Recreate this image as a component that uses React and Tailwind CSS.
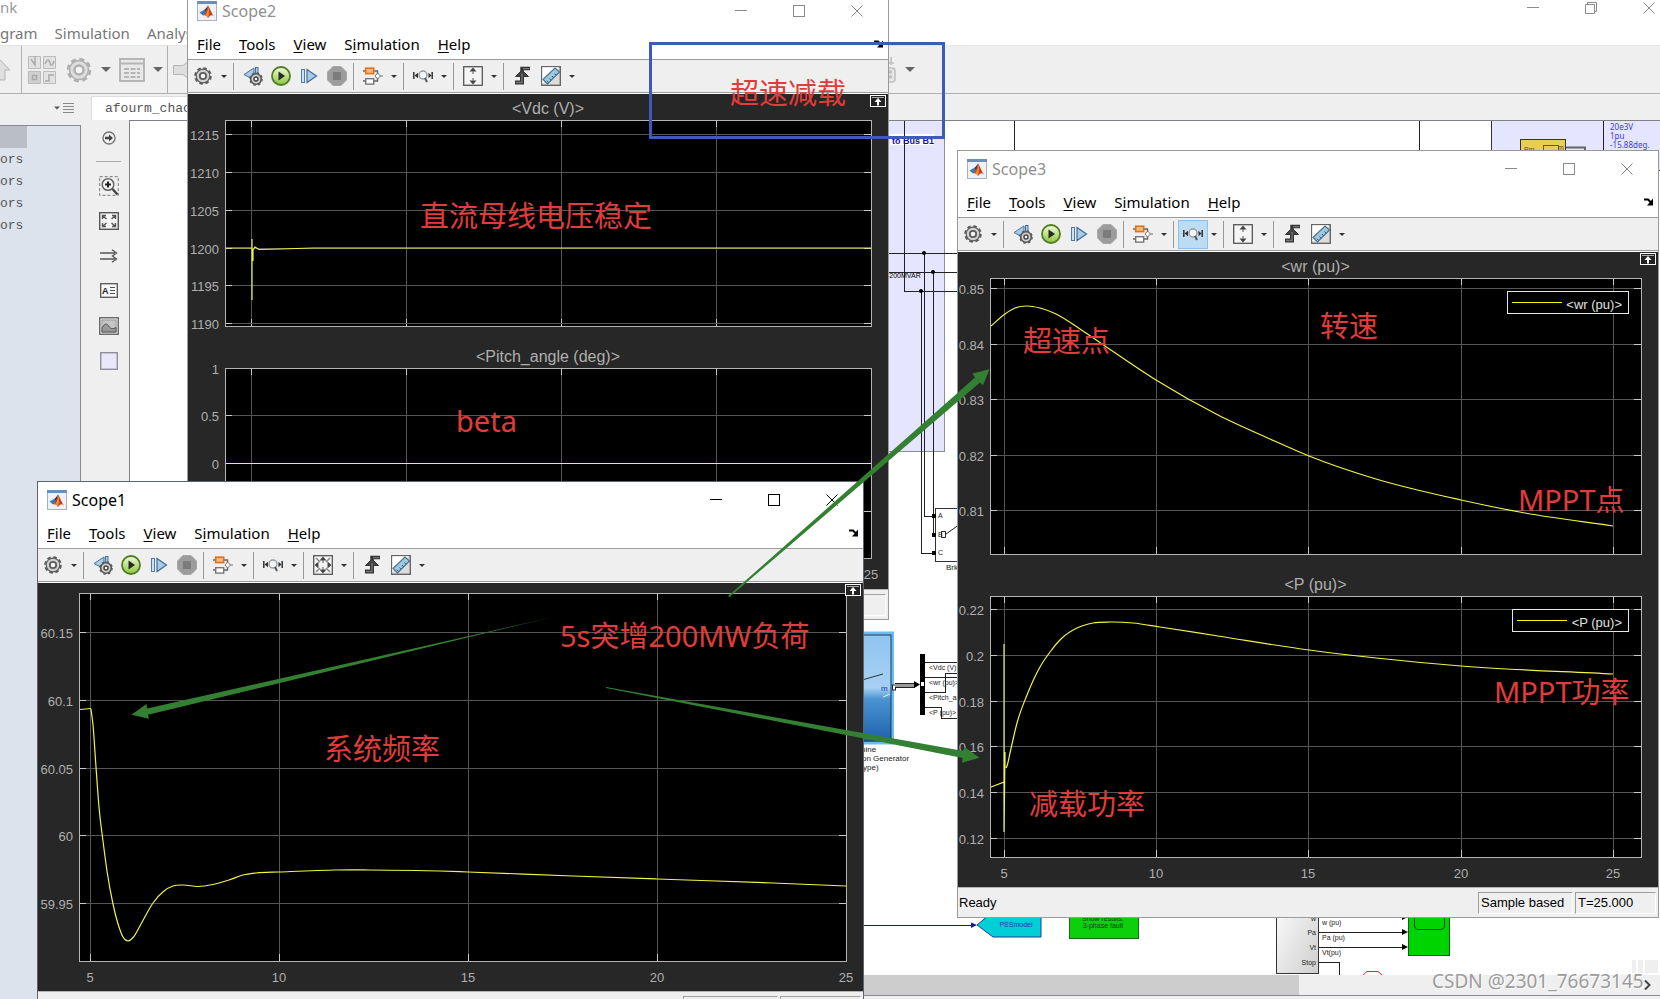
import React from 'react'
import clsx from 'clsx'

const UI = "font-['Noto_Sans','Noto_Sans_CJK_SC',sans-serif]"

/* ---------- icons ---------- */

function MatlabIcon() {
  return (
    <svg width="20" height="20" viewBox="0 0 20 20">
      <rect x="0.5" y="0.5" width="19" height="19" fill="#eef1f5" stroke="#a9b1ba" />
      <rect x="0" y="0" width="20" height="3" fill="#6d8fb5" />
      <path d="M2.5 11.5 L7 9 L9.5 12 L6 14.5 Z" fill="#3f76b4" />
      <path d="M7 9 C9 8 10 5.5 11 4.5 L9.5 12 Z" fill="#2b3d63" />
      <path d="M11 4.5 C12.5 6 14.5 12.5 17 15.5 C14.5 13.5 13.5 13.5 11 17 C10 15 8.5 14 6 14.5 C9 12.5 10 8 11 4.5 Z" fill="#c9401b" />
      <path d="M11.3 5.5 C12.3 8.5 12.4 12.5 11 17 C10.3 15.6 9.4 14.6 8 14.4 C10 12 10.8 9 11.3 5.5 Z" fill="#f08a2c" />
    </svg>
  )
}

function GearIcon({ size = 20, color = '#5c5c5c', fill = '#d2d2d2' }) {
  return (
    <svg width={size} height={size} viewBox="0 0 20 20">
      <circle cx="10" cy="10" r="7.8" fill="none" stroke={color} strokeWidth="2" strokeDasharray="3.6 2.526" />
      <circle cx="10" cy="10" r="6.8" fill={fill} stroke={color} strokeWidth="1.2" />
      <circle cx="10" cy="10" r="3.2" fill="#f4f4f4" stroke={color} strokeWidth="1.8" />
    </svg>
  )
}

function StepBackIcon() {
  return (
    <svg width="20" height="20" viewBox="0 0 20 20">
      <path d="M11 2 L1 8.5 L11 14 Z" fill="#a8cbe8" stroke="#4a7197" />
      <rect x="12.5" y="1.5" width="2.5" height="8" fill="#a8cbe8" stroke="#4a7197" />
      <circle cx="13" cy="13" r="5.3" fill="#d2d2d2" stroke="#555" strokeWidth="1.6" />
      <circle cx="13" cy="13" r="6.2" fill="none" stroke="#555" strokeWidth="1.2" strokeDasharray="2.5 2.37" />
      <circle cx="13" cy="13" r="2" fill="#fff" stroke="#444" strokeWidth="1.5" />
    </svg>
  )
}

function RunIcon() {
  return (
    <svg width="20" height="20" viewBox="0 0 20 20">
      <defs>
        <linearGradient id="run" x1="0" y1="0" x2="0" y2="1">
          <stop offset="0" stopColor="#f1fae0" />
          <stop offset="1" stopColor="#8cc63c" />
        </linearGradient>
      </defs>
      <circle cx="10" cy="10" r="9" fill="url(#run)" stroke="#4f7d20" strokeWidth="1.8" />
      <path d="M7.5 5.5 L14 10 L7.5 14.5 Z" fill="#262b22" />
    </svg>
  )
}

function StepIcon() {
  return (
    <svg width="20" height="20" viewBox="0 0 20 20">
      <rect x="2.5" y="3.5" width="3" height="13" fill="#cfe2f2" stroke="#4f7ba5" />
      <path d="M8 3.5 L17.5 10 L8 16.5 Z" fill="#a8cbe8" stroke="#3f6c98" strokeWidth="1.2" />
    </svg>
  )
}

function StopIcon() {
  return (
    <svg width="20" height="20" viewBox="0 0 20 20">
      <path d="M6 0.5 H14 L19.5 6 V14 L14 19.5 H6 L0.5 14 V6 Z" fill="#9c9c9c" stroke="#a8a8a8" />
      <rect x="6" y="6" width="8" height="8" fill="#7c7c7c" />
    </svg>
  )
}

function BlocksIcon() {
  return (
    <svg width="20" height="20" viewBox="0 0 20 20">
      <path d="M0 5 H3 M11 5 H14.5 V8 M14.5 12 V15 H11 M0 15 H3" fill="none" stroke="#666" strokeWidth="1.4" />
      <rect x="2.7" y="2.2" width="8" height="5.4" fill="#f7b77c" stroke="#d9731d" strokeWidth="1.6" />
      <rect x="2.7" y="12.7" width="8" height="5.4" fill="#fff" stroke="#777" strokeWidth="1.4" />
      <path d="M14.7 7 L17.4 10 L14.7 13 L12 10 Z" fill="#fff" stroke="#777" />
      <path d="M17 10 H20" stroke="#777" />
    </svg>
  )
}

function ZoomXIcon() {
  return (
    <svg width="20" height="20" viewBox="0 0 20 20">
      <path d="M0.8 6 V13 M19.2 6 V13" stroke="#333" strokeWidth="1.5" />
      <path d="M1.5 9.5 L5 6.7 V12.3 Z M18.5 9.5 L15.5 6.7 V12.3 Z" fill="#333" />
      <circle cx="10" cy="9" r="4" fill="#f2f7fb" stroke="#999" strokeWidth="1.4" />
      <path d="M12 12 L14 16" stroke="#555" strokeWidth="2" />
    </svg>
  )
}

function FitIcon({ all }) {
  return (
    <svg width="20" height="20" viewBox="0 0 20 20">
      <rect x="0.7" y="0.7" width="18.6" height="18.6" fill="#f5f5f5" stroke="#555" strokeWidth="1.3" />
      <path d="M10 1.5 L13.5 5.5 H6.5 Z M10 18.5 L13.5 14.5 H6.5 Z" fill="#444" />
      <path d="M10 5 V8 M10 12 V15" stroke="#777" strokeWidth="1.3" />
      {all && <path d="M1.5 10 L5.5 6.5 V13.5 Z M18.5 10 L14.5 6.5 V13.5 Z" fill="#444" />}
      {all && <path d="M3 3 L7 7 M17 3 L13 7 M3 17 L7 13 M17 17 L13 13" stroke="#888" strokeWidth="1.5" />}
    </svg>
  )
}

function TriggerIcon() {
  return (
    <svg width="20" height="20" viewBox="0 0 20 20">
      <path d="M2 16.5 H9 V8" fill="none" stroke="#333" strokeWidth="4" />
      <path d="M2.5 10.5 L9 4 L15.5 10.5 Z" fill="#444" stroke="#333" />
      <path d="M9 5 V2.5 H17" fill="none" stroke="#333" strokeWidth="3.4" />
      <path d="M3 16.5 H9 V8 M10 2.6 H16.4" fill="none" stroke="#777" strokeWidth="1.4" />
    </svg>
  )
}

function RulerIcon() {
  return (
    <svg width="20" height="20" viewBox="0 0 20 20">
      <rect x="0.7" y="0.7" width="18.6" height="18.6" fill="#dcdcdc" stroke="#666" strokeWidth="1.4" />
      <path d="M1.3 1.3 H18 L1.3 18 Z" fill="#fff" />
      <path d="M2 13.5 L14 2 L18.5 6 L6.5 18 Z" fill="#9fc9e2" stroke="#44708c" strokeWidth="1.1" />
      <path d="M7.5 16.5 L6 14.8 M10 14.2 L8.5 12.5 M12.5 11.8 L11 10 M15 9.3 L13.5 7.5" stroke="#2f5870" />
    </svg>
  )
}

function DockArrow() {
  return (
    <svg width="10" height="8" viewBox="0 0 10 8">
      <path d="M0 1.5 H4 L8 5.5" fill="none" stroke="#000" strokeWidth="2" />
      <path d="M9 0.5 V7.5 H3 Z" fill="#000" />
    </svg>
  )
}

function Caret({ className }) {
  return (
    <svg width="6" height="3" viewBox="0 0 6 3" className={className}>
      <path d="M0 0 H6 L3 3 Z" fill="currentColor" />
    </svg>
  )
}

function WindowButtons({ active, restore }) {
  const kinds = ['min', restore ? 'restore' : 'max', 'close']
  return (
    <div className={clsx('flex', active ? 'text-black' : 'text-[#8a8a8a]')}>
      {kinds.map(kind => (
        <button key={kind} aria-label={kind} className="flex h-7 w-[58px] items-center justify-center">
          <svg width="12" height="12" viewBox="0 0 12 12" fill="none" stroke="currentColor">
            {kind === 'min' && <path d="M0 5.5 H12" />}
            {kind === 'max' && <rect x="0.5" y="0.5" width="11" height="11" />}
            {kind === 'close' && <path d="M0.5 0.5 L11.5 11.5 M11.5 0.5 L0.5 11.5" />}
            {kind === 'restore' && <path d="M0.5 2.5 H9.5 V11.5 H0.5 Z M2.5 2 V0.5 H11.5 V9.5 H10" />}
          </svg>
        </button>
      ))}
    </div>
  )
}

/* ---------- plots ---------- */

// cubic hermite through the samples; x must be increasing
function smooth(points) {
  const n = points.length
  const slope = i => (points[i + 1][1] - points[i][1]) / (points[i + 1][0] - points[i][0])
  const tangents = points.map((p, i) => {
    if (i === 0) return slope(0)
    if (i === n - 1) return slope(n - 2)
    const h0 = p[0] - points[i - 1][0]
    const h1 = points[i + 1][0] - p[0]
    return (slope(i - 1) * h1 + slope(i) * h0) / (h0 + h1)
  })
  let d = `M${points[0][0]} ${points[0][1]}`
  for (let i = 0; i < n - 1; i++) {
    const [xa, ya] = points[i]
    const [xb, yb] = points[i + 1]
    const h = (xb - xa) / 3
    d += ` C${xa + h} ${ya + tangents[i] * h} ${xb - h} ${yb - tangents[i + 1] * h} ${xb} ${yb}`
  }
  return d
}

function Plot({ box, title, xTicks, yTicks, showX, legend, children }) {
  const [l, t, r, b] = box
  const tick = 7
  return (
    <g>
      <rect x={l} y={t} width={r - l} height={b - t} fill="#000" />
      <g shapeRendering="crispEdges">
        {xTicks.map(([v, x]) => (
          <g key={v}>
            <path d={`M${x} ${t} V${b}`} stroke="#555" />
            <path d={`M${x} ${t} v${tick} M${x} ${b} v-${tick}`} stroke="#c8c8c8" />
          </g>
        ))}
        {yTicks.map(([v, y]) => (
          <g key={v}>
            <path d={`M${l} ${y} H${r}`} stroke="#555" />
            <path d={`M${l} ${y} h${tick} M${r} ${y} h-${tick}`} stroke="#c8c8c8" />
          </g>
        ))}
        <rect x={l} y={t} width={r - l} height={b - t} fill="none" stroke="#b4b4b4" />
      </g>
      <g fontSize="13" fill="#afafaf">
        {yTicks.map(([v, y]) => (
          <text key={v} x={l - 6} y={y + 6} textAnchor="end">{v}</text>
        ))}
        {showX && xTicks.map(([v, x]) => (
          <text key={v} x={x} y={b + 21} textAnchor="middle">{v}</text>
        ))}
      </g>
      {title && (
        <text x={(l + r) / 2} y={t - 6} fontSize="16" fill="#afafaf" textAnchor="middle">{title}</text>
      )}
      <g fill="none" stroke="#f2f24a" strokeWidth="1.2">{children}</g>
      {legend && (
        <g>
          <rect x={legend.x} y={t + 13} width={670 - legend.x} height="22" fill="#000" stroke="#e6e6e6" shapeRendering="crispEdges" />
          <path d={`M${legend.x + 5} ${t + 24} h50`} stroke="#ff0" shapeRendering="crispEdges" />
          <text x="664" y={t + 31} fontSize="13" fill="#e0e0e0" textAnchor="end">{title}</text>
        </g>
      )}
    </g>
  )
}

/* ---------- scope window ---------- */

const menus = [['', 'F', 'ile'], ['', 'T', 'ools'], ['', 'V', 'iew'], ['S', 'i', 'mulation'], ['', 'H', 'elp']]

function Tool({ label, on, children }) {
  return (
    <button aria-label={label} className={clsx('flex h-[27px] w-7 items-center justify-center', on && 'bg-[#bcdcf4] outline outline-[#90c0e8]')}>
      {children}
    </button>
  )
}

function Drop({ label }) {
  return (
    <button aria-label={label} className="flex h-[27px] w-[14px] items-center justify-center text-[#333]">
      <Caret />
    </button>
  )
}

function Sep() {
  return <div className="mr-[5px] ml-[2px] h-[27px] w-px bg-[#999]" />
}

function ScopeWindow({ title, active, className, plotHeight, zoomOn, fitAll, status, children }) {
  return (
    <section className={clsx('absolute flex flex-col border bg-white', active ? 'border-[#5d646b]' : 'border-[#9a9a9a]', UI, className)}>
      <header className="flex h-9 items-center pr-[2px] pl-[9px]">
        <MatlabIcon />
        <h2 className={clsx('ml-[5px] text-base leading-6', active ? 'text-black' : 'text-[#8f8f8f]')}>{title}</h2>
        <div className="ml-auto">
          <WindowButtons active={active} />
        </div>
      </header>
      <nav className="flex h-[30px] items-center">
        {menus.map(([pre, key, rest]) => (
          <button key={key} className="px-[9px] text-[15px] leading-5 text-black">
            {pre}<span className="underline underline-offset-2">{key}</span>{rest}
          </button>
        ))}
        <button aria-label="Dock" className="mr-1 ml-auto">
          <DockArrow />
        </button>
      </nav>
      <div className="flex h-[34px] items-center border-y border-[#9c9c9c] bg-[#efefef] pl-px">
        <Tool label="Configuration"><GearIcon /></Tool>
        <Drop label="More configuration" />
        <Sep />
        <Tool label="Step back"><StepBackIcon /></Tool>
        <Tool label="Run"><RunIcon /></Tool>
        <Tool label="Step forward"><StepIcon /></Tool>
        <Tool label="Stop"><StopIcon /></Tool>
        <Sep />
        <Tool label="Highlight block"><BlocksIcon /></Tool>
        <Drop label="More highlight" />
        <Sep />
        <Tool label="Zoom X" on={zoomOn}><ZoomXIcon /></Tool>
        <Drop label="More zoom" />
        <Sep />
        <Tool label="Scale axes"><FitIcon all={fitAll} /></Tool>
        <Drop label="More scaling" />
        <Sep />
        <Tool label="Triggers"><TriggerIcon /></Tool>
        <Tool label="Measurements"><RulerIcon /></Tool>
        <Drop label="More measurements" />
      </div>
      <div className={clsx('relative mt-px bg-[#272727]', plotHeight)}>
        <svg className="block h-full w-full font-['Liberation_Sans',Arial,sans-serif]">{children}</svg>
        <button aria-label="Maximize axes" className="absolute top-px right-[2px]">
          <svg width="16" height="12" viewBox="0 0 16 12">
            <rect x="0.5" y="0.5" width="15" height="11" fill="#222" stroke="#fff" />
            <path d="M2 2.5 H14" stroke="#aaa" />
            <path d="M8 3 L11.5 7 H9 V10.5 H7 V7 H4.5 Z" fill="#fff" />
          </svg>
        </button>
      </div>
      <footer className="flex h-[30px] items-center gap-[2px] border-t border-[#b5b5b5] bg-[#efefef] pr-[2px] pl-px font-['Liberation_Sans',Arial,sans-serif] text-[13px] text-black">
        <span className="mr-auto">{status && 'Ready'}</span>
        <span className="h-[22px] w-[95px] border border-t-[#a0a0a0] border-r-white border-b-white border-l-[#a0a0a0] pl-[2px] leading-5">{status && 'Sample based'}</span>
        <span className="h-[22px] w-[81px] border border-t-[#a0a0a0] border-r-white border-b-white border-l-[#a0a0a0] pl-[2px] leading-5">{status}</span>
      </footer>
    </section>
  )
}

const freq = [
  [53, 126], [55, 142], [58, 184], [61, 224], [65, 258], [69, 288], [75, 321], [81, 344], [85, 354],
  [90, 358], [95, 354.5], [103, 341], [115, 320], [126, 308], [135, 303], [145, 302], [160, 303.5],
  [175, 301.5], [191, 297], [205, 292], [218, 290], [241, 289], [298, 287], [331, 287], [402, 288],
  [430, 289], [535, 293], [619, 296], [735, 300], [808, 303],
]
const speed = [
  [33, 74], [47, 62], [57, 56], [68, 54], [82, 56], [98, 62], [122, 77], [147, 94], [198, 128],
  [260, 163], [312, 187], [351, 204], [418, 227], [503, 248], [567, 261], [655, 274],
]
const power = [
  [48, 516], [49, 514], [52, 501], [59, 471], [69, 443], [82, 415], [92, 400], [104, 386], [119, 376],
  [135, 371], [152, 370], [175, 371], [202, 375], [260, 384], [351, 398], [418, 406], [503, 414], [655, 422],
]

const x1 = [[5, 52], [10, 241], [15, 430], [20, 619], [25, 808]]
const x2 = [[5, 63], [10, 218], [15, 373], [20, 528], [25, 683]]
const x3 = [[5, 46], [10, 198], [15, 350], [20, 503], [25, 655]]

/* ---------- model editor behind the scopes ---------- */

function Palette() {
  const cell = 'flex h-[35px] items-center justify-center'
  return (
    <div className="flex w-12 flex-col bg-[#efefef] pl-[7px]">
      <button aria-label="Hide browser" className={cell}>
        <svg width="14" height="14" viewBox="0 0 14 14">
          <circle cx="7" cy="7" r="6" fill="#f2f2f2" stroke="#777" strokeWidth="1.4" />
          <path d="M3 5.8 H7 V3.5 L11 7 L7 10.5 V8.2 H3 Z" fill="#444" />
        </svg>
      </button>
      <div className="mx-2 my-[6px] h-px bg-[#aaa]" />
      <button aria-label="Zoom" className={cell}>
        <svg width="20" height="20" viewBox="0 0 20 20" fill="none">
          <rect x="0.7" y="0.7" width="18.6" height="18.6" stroke="#777" strokeDasharray="3 2" />
          <circle cx="9" cy="8.5" r="5.8" fill="#f6f6f6" stroke="#666" strokeWidth="1.5" />
          <path d="M9 5.5 V11.5 M6 8.5 H12" stroke="#222" strokeWidth="2" />
          <path d="M13.5 13 L18.5 18.5" stroke="#444" strokeWidth="2.4" />
        </svg>
      </button>
      <button aria-label="Fit to view" className={cell}>
        <svg width="20" height="18" viewBox="0 0 20 18" fill="none">
          <rect x="0.7" y="0.7" width="18.6" height="16.6" fill="#f4f4f4" stroke="#555" strokeWidth="1.4" />
          <path d="M3.5 7 V3.5 H7 M13 3.5 H16.5 V7 M16.5 11 V14.5 H13 M7 14.5 H3.5 V11 M3.5 3.5 L7.5 7 M16.5 3.5 L12.5 7 M3.5 14.5 L7.5 11 M16.5 14.5 L12.5 11" stroke="#555" strokeWidth="1.4" />
        </svg>
      </button>
      <button aria-label="Sample time" className={cell}>
        <svg width="20" height="14" viewBox="0 0 20 14" fill="none">
          <path d="M1 4 H16 M1 10 H16" stroke="#555" strokeWidth="1.6" />
          <path d="M13 0.8 L17.5 4 L13 7.2 M13 6.8 L17.5 10 L13 13.2" stroke="#555" strokeWidth="1.3" />
        </svg>
      </button>
      <button aria-label="Annotation" className={cell}>
        <svg width="18" height="15" viewBox="0 0 18 15">
          <rect x="0.7" y="0.7" width="16.6" height="13.6" fill="#fafafa" stroke="#555" strokeWidth="1.3" />
          <text x="2" y="11" fontSize="9" fontWeight="bold" fill="#222" fontFamily="Liberation Sans">A</text>
          <path d="M10 4.5 H15 M10 7.5 H15 M10 10.5 H15" stroke="#555" />
        </svg>
      </button>
      <button aria-label="Image" className={cell}>
        <svg width="20" height="18" viewBox="0 0 20 18">
          <rect x="0.7" y="0.7" width="18.6" height="16.6" fill="#ddd" stroke="#666" strokeWidth="1.3" />
          <rect x="3" y="3" width="14" height="12" fill="#c6c6c6" stroke="#999" />
          <path d="M3 11 C6 6 8 6 10 9.5 C12 12.5 14 12 17 10.5 V15 H3 Z" fill="#999" stroke="#555" />
        </svg>
      </button>
      <button aria-label="Area" className={cell}>
        <svg width="18" height="18" viewBox="0 0 18 18">
          <rect x="0.7" y="0.7" width="16.6" height="16.6" fill="#e8e8fa" stroke="#8f8f9c" strokeWidth="1.4" />
        </svg>
      </button>
    </div>
  )
}

function Diagram() {
  return (
    <svg className="block h-full w-full font-['Liberation_Sans',Arial,sans-serif]">
      <defs>
        <linearGradient id="sea" x1="0" y1="0" x2="0" y2="1">
          <stop offset="0" stopColor="#8fc4ef" />
          <stop offset="0.5" stopColor="#a6d0f4" />
          <stop offset="0.6" stopColor="#4a94d2" />
          <stop offset="1" stopColor="#1c5fa8" />
        </linearGradient>
        <linearGradient id="block" x1="0" y1="0" x2="1" y2="1">
          <stop offset="0" stopColor="#fff" />
          <stop offset="1" stopColor="#cfcfcf" />
        </linearGradient>
      </defs>
      {/* sheet origin sits at the top left of the editor, not of the canvas */}
      <g transform="translate(-130 -121)">
        <g shapeRendering="crispEdges">
          <rect x="800" y="110" width="144" height="341" fill="#e5e5ff" stroke="#8d8d98" />
          <rect x="1491" y="110" width="180" height="60" fill="#e5e5ff" stroke="#333" />
          <rect x="890" y="134" width="44" height="11" fill="#fff" />
        </g>
        <text x="892" y="144" fontSize="9" fontWeight="bold" fill="#1010b0">to Bus B1</text>
        <g fill="none" stroke="#222" shapeRendering="crispEdges">
          <path d="M904 121 V291 H957 M880 253 H957 M880 272 H957" />
          <path d="M924 253 V516 H934 M933 272 V535 M921 291 V553 H934" />
          <path d="M1014 121 V151 M1419 121 V151 M1603 121 V151" />
        </g>
        <circle cx="924" cy="253" r="2" />
        <circle cx="933" cy="272" r="2" />
        <circle cx="921" cy="291" r="2" />
        <text x="887" y="278" fontSize="7">-200MVAR</text>

        <rect x="935" y="508" width="40" height="53" fill="#fff" stroke="#333" shapeRendering="crispEdges" />
        <path d="M932 514 h4 v4 h-4 Z M932 533 h4 v4 h-4 Z M932 551 h4 v4 h-4 Z" />
        <g fontSize="7" fill="#222">
          <text x="938" y="518">A</text>
          <text x="938" y="537">B</text>
          <text x="938" y="555">C</text>
        </g>
        <path d="M941.5 531.5 H945.5 V537.5 H941.5 Z M946 534 L958 525.5" fill="none" stroke="#222" />
        <text x="946" y="570" fontSize="8" fill="#222">Brk</text>

        <rect x="820" y="633" width="72.5" height="110" fill="url(#sea)" stroke="#6cbcf0" strokeWidth="3" />
        <rect x="822" y="635" width="69" height="106" fill="none" stroke="#17395c" />
        <path d="M862 680 L883 674" stroke="#333" />
        <path d="M883 697 L890 694" stroke="#e6f2fb" />
        <text x="881" y="691" fontSize="8" fill="#1c2fb8">m</text>
        <rect x="892.5" y="685" width="3" height="5" fill="#fff" stroke="#222" />
        <path d="M895 685.5 H917" stroke="#999" strokeWidth="3" />
        <path d="M895 683.5 H915 M895 687.5 H915" stroke="#222" />
        <path d="M914 681 L920 684.5 L914 688 Z" />
        <rect x="920" y="654" width="5" height="61" />
        <rect x="921" y="682" width="3" height="4" fill="#fff" />
        <path d="M925 662 H957 M925 677 H957 M925 692 H945 V673 H957 M925 707 H941 V718 H957" fill="none" stroke="#222" shapeRendering="crispEdges" />
        <g fontSize="7" fill="#222">
          <text x="929" y="670">&lt;Vdc (V)&gt;</text>
          <text x="929" y="685">&lt;wr (pu)&gt;</text>
          <text x="929" y="700">&lt;Pitch_an</text>
          <text x="929" y="715">&lt;P (pu)&gt;</text>
        </g>
        <g fontSize="8" fill="#222">
          <text x="861" y="752">bine</text>
          <text x="862" y="761">on Generator</text>
          <text x="863" y="770">ype)</text>
        </g>

        <path d="M860 925.5 H972" stroke="#1a1a90" />
        <path d="M971 922.5 L977 925 L971 928 Z" fill="#1a1a90" />
        <path d="M977 925 L1001 905 H1041 V937 H993 Z" fill="#00d0d6" stroke="#1f3a9c" />
        <text x="1016" y="927" fontSize="7" fill="#1a2fb8" textAnchor="middle">PSSmodel</text>
        <rect x="1069.5" y="900.5" width="69" height="38" fill="#0bd00b" stroke="#14691a" />
        <g fontSize="7" fill="#123c12" textAnchor="middle">
          <text x="1103" y="921">Show results:</text>
          <text x="1103" y="928">3-phase fault</text>
        </g>

        <rect x="1276.5" y="890.5" width="42" height="83" fill="url(#block)" stroke="#333" />
        <g fontSize="7" fill="#222" textAnchor="end">
          <text x="1316" y="921">w</text>
          <text x="1316" y="935">Pa</text>
          <text x="1316" y="950">Vt</text>
          <text x="1316" y="965">Stop</text>
        </g>
        <path d="M1319 917 H1403 M1319 932 H1403 M1319 947 H1403 M1319 962 H1339 V975" fill="none" stroke="#222" shapeRendering="crispEdges" />
        <path d="M1402 914 L1408 917 L1402 920 Z M1402 929 L1408 932 L1402 935 Z M1402 944 L1408 947 L1402 950 Z" />
        <g fontSize="7" fill="#222">
          <text x="1322" y="925">w (pu)</text>
          <text x="1322" y="940">Pa (pu)</text>
          <text x="1322" y="955">Vt(pu)</text>
        </g>
        <rect x="1408.5" y="900.5" width="41" height="55" fill="#00d400" stroke="#145c14" />
        <path d="M1414.5 910 V926 Q1414.5 929.5 1418 929.5 H1440 Q1444.5 929.5 1444.5 926 V910" fill="none" stroke="#123c12" />
        <path d="M1363 975 L1367 971.5 H1378 L1382 975" fill="none" stroke="#c33" />
        <path d="M1632 960 h4 v13 h-4 Z M1638 960 h5 v13 h-5 Z M1645 960 h13 v13 h-13 Z" fill="#efefef" />

        <rect x="1520.5" y="139.5" width="45" height="20" fill="#e6cf52" stroke="#333" />
        <rect x="1543.5" y="145.5" width="15" height="12" fill="none" stroke="#6b5c12" />
        <text x="1524" y="152" fontSize="7" fill="#5a4c0a">Pm</text>
        <text x="1558" y="150" fontSize="7" fill="#5a4c0a">m</text>
        <path d="M1566 147.5 H1585 V152" fill="none" stroke="#666" strokeWidth="2" />
        <g fontSize="8" fill="#3d3dd8" fontFamily="Noto Sans">
          <text x="1610" y="130">20e3V</text>
          <text x="1610" y="139">1pu</text>
          <text x="1610" y="148">-15.88deg.</text>
        </g>
      </g>
    </svg>
  )
}

function EditorToolbar() {
  return (
    <div className="flex h-[49px] items-center border-t border-b border-t-[#e4e4e4] border-b-[#b0b0b0] bg-[#efefef] text-[#666]">
      <button aria-label="Up" className="w-[21px]">
        <svg width="11" height="22" viewBox="0 0 11 22">
          <path d="M0 0.8 L10 11 H5 V21 H0" fill="#dedede" stroke="#b5b5b5" />
        </svg>
      </button>
      <div className="h-full w-px bg-[#b0b0b0]" />
      <button aria-label="Library" className="ml-[6px]">
        <svg width="28" height="28" viewBox="0 0 28 28" fill="#e2e2e2" stroke="#bbb">
          <path d="M0.5 0.5 H12.5 V12.5 H0.5 Z M15.5 0.5 H27.5 V12.5 H15.5 Z M15.5 15.5 H27.5 V27.5 H15.5 Z" />
          <path d="M0.5 15.5 H12.5 V27.5 H0.5 Z" fill="#cfcfcf" />
          <path d="M3 3 L7 9 V0.5 M17 8 C19 3 21 3 22 7 S25 9 26 5 M17 25 H21 V19 H26 M4.5 19.5 H8.5 V23.5 H4.5 Z" fill="none" stroke="#aaa" strokeWidth="1.5" />
        </svg>
      </button>
      <button aria-label="Settings" className="ml-[9px]"><GearIcon size={28} color="#b0b0b0" fill="#dedede" /></button>
      <Caret className="ml-2 h-[5px] w-[10px]" />
      <button aria-label="Explorer" className="ml-2">
        <svg width="26" height="24" viewBox="0 0 26 24" fill="none" stroke="#b5b5b5">
          <rect x="1" y="1" width="24" height="22" fill="#e8e8e8" strokeWidth="2" />
          <path d="M2 5.5 H24" strokeWidth="2" />
          <path d="M5 11 H21 M5 15 H21 M5 19 H21" strokeWidth="2" strokeDasharray="5 1.5" />
        </svg>
      </button>
      <Caret className="ml-2 h-[5px] w-[10px]" />
      <div className="ml-1 h-full w-px bg-[#b0b0b0]" />
      <svg className="ml-[5px]" width="18" height="20" viewBox="0 0 18 20">
        <path d="M0.5 5.5 H10 L17 0 V20 L10 14.5 H0.5 Z" fill="#dedede" stroke="#b5b5b5" />
      </svg>
      <button aria-label="Build" className="ml-[686px]">
        <svg width="20" height="26" viewBox="0 0 20 26" fill="none" stroke="#c0c0c0" strokeWidth="1.6">
          <path d="M14 0 V8 M11 6 H17" />
          <rect x="4" y="11" width="14" height="14" rx="3" fill="#e6e6e6" />
          <path d="M12 15 H15 M12 20 H15" strokeWidth="3" />
        </svg>
      </button>
      <Caret className="ml-2 h-[5px] w-[10px]" />
    </div>
  )
}

function Editor() {
  return (
    <div className={clsx('flex h-full flex-col bg-white', UI)}>
      <div className="flex h-[15px] items-center justify-between">
        <h1 className="text-[15px] leading-[15px] text-[#999]">nk</h1>
        <div className="-mr-[18px]">
          <WindowButtons restore />
        </div>
      </div>
      <nav className="flex h-[30px] items-center gap-[17px] text-[15px] leading-5 text-[#777]">
        <button className="pt-[6px]">gram</button>
        <button className="pt-[6px]">Simulation</button>
        <button className="pt-[6px]">Analysis</button>
      </nav>
      <EditorToolbar />
      <div className="flex min-h-0 flex-1 bg-[#efefef]">
        <aside className="flex w-[81px] flex-col font-['Liberation_Mono',monospace] text-[13px] text-[#555]">
          <div className="flex h-[31px] items-center justify-end gap-[3px] pr-[7px] pb-1">
            <Caret className="h-1 w-[6px]" />
            <svg width="11" height="10" viewBox="0 0 11 10">
              <path d="M0 0.5 H11 M0 3.5 H11 M0 6.5 H11 M0 9.5 H11" stroke="#888" />
            </svg>
          </div>
          <ul className="flex-1 border-t border-r border-[#8a8a92] bg-[#dce3ed]">
            <li className="h-[22px] w-[27px] bg-[#b9bec7]" />
            {[0, 1, 2, 3].map(i => (
              <li key={i} className="h-[22px] leading-6">ors</li>
            ))}
          </ul>
        </aside>
        <div className="flex min-w-0 flex-1 flex-col">
          <div className="flex h-[26px] items-end pl-[10px]">
            <button className="h-6 border border-b-0 border-[#ddd] bg-white px-[13px] font-['Liberation_Mono',monospace] text-[13px] text-[#555]">afourm_chaosu</button>
          </div>
          <div className="flex min-h-0 flex-1">
            <Palette />
            <div className="flex min-w-0 flex-1 flex-col border-t border-l border-[#808088] bg-white">
              <div className="min-h-0 flex-1 overflow-hidden">
                <Diagram />
              </div>
              <div className="flex h-5 items-center bg-[#efefef]">
                <div className="h-full w-[1169px] bg-[#cdcdcd]" />
                <svg className="mr-[9px] ml-auto" width="7" height="10" viewBox="0 0 7 10">
                  <path d="M1 0.5 L5.5 5 L1 9.5" fill="none" stroke="#444" strokeWidth="2" />
                </svg>
              </div>
            </div>
          </div>
          <div className="h-1 border-t border-[#8a8a92] bg-[#efefef]" />
        </div>
      </div>
    </div>
  )
}

/* ---------- notes drawn over everything ---------- */

function Note({ className, children }) {
  return (
    <p className={clsx('absolute text-[29px] leading-10 whitespace-nowrap text-[#e03c3c]', UI, className)}>{children}</p>
  )
}

function Notes() {
  return (
    <div className="pointer-events-none absolute inset-0">
      <svg className="absolute inset-0 h-full w-full" fill="#338033">
        <path d="M553 617 L147 708.5 L146.5 704 L131.5 714.7 L149 718.7 L148 714.7 Z" />
        <path d="M728 596 L975 377.5 L972.5 373.5 L989.5 369.3 L983 385.3 L980 382.5 L729.5 597 Z" />
        <path d="M606 687 L963.5 751 L964.5 747 L979.5 757.7 L962 762.7 L962.7 758 L606 688 Z" />
      </svg>
      <div className="absolute top-[42px] left-[649px] h-[97px] w-[296px] border-3 border-[#3f5bb8]" />
      <Note className="top-[73px] left-[730px]">超速减载</Note>
      <Note className="top-[196px] left-[420px]">直流母线电压稳定</Note>
      <Note className="top-[401px] left-[456px]">beta</Note>
      <Note className="top-[729px] left-[324px]">系统频率</Note>
      <Note className="top-[616px] left-[560px]">5s突增200MW负荷</Note>
      <Note className="top-[321px] left-[1023px]">超速点</Note>
      <Note className="top-[306px] left-[1320px]">转速</Note>
      <Note className="top-[480px] left-[1518px]">MPPT点</Note>
      <Note className="top-[672px] left-[1494px]">MPPT功率</Note>
      <Note className="top-[784px] left-[1029px]">减载功率</Note>
      <p className={clsx('absolute top-[969px] left-[1432px] text-[19px] leading-6 whitespace-nowrap text-[#9c9c9c] [text-shadow:1px_1px_0_#fff]', UI)}>CSDN @2301_76673145</p>
    </div>
  )
}

export default function App() {
  return (
    <main className="relative h-screen overflow-hidden">
      <Editor />

      <ScopeWindow title="Scope2" className="-top-2 left-[187px] w-[702px]" plotHeight="h-[495px]">
        <Plot
          box={[37, 26, 683, 232]}
          title="<Vdc (V)>"
          xTicks={x2}
          yTicks={[[1215, 40], [1210, 78], [1205, 116], [1200, 154], [1195, 191], [1190, 229]]}
        >
          <path d="M38 154 H64 V145 V206 V154 M65 167 V156 L67 153 L71 155.5 L92 155 L125 154 H683" />
        </Plot>
        <Plot
          box={[37, 274, 683, 464]}
          title="<Pitch_angle (deg)>"
          xTicks={x2}
          yTicks={[['1', 274], ['0.5', 321], ['0', 369], ['-0.5', 417]]}
          showX
        >
          <path d="M38 369.5 H683" />
        </Plot>
      </ScopeWindow>

      <ScopeWindow title="Scope3" className="top-[150px] left-[957px] w-[702px]" plotHeight="h-[635px]" zoomOn status="T=25.000">
        <Plot
          box={[32, 26, 683, 302]}
          title="<wr (pu)>"
          xTicks={x3}
          yTicks={[['0.85', 36], ['0.84', 92], ['0.83', 147], ['0.82', 203], ['0.81', 258]]}
          legend={{ x: 549 }}
        >
          <path d={smooth(speed)} />
        </Plot>
        <Plot
          box={[32, 344, 683, 605]}
          title="<P (pu)>"
          xTicks={x3}
          yTicks={[['0.22', 357], ['0.2', 403], ['0.18', 449], ['0.16', 494], ['0.14', 540], ['0.12', 586]]}
          legend={{ x: 554 }}
          showX
        >
          <path d="M33 535 L46 530 V392 V580 L47 500 V516" />
          <path d={smooth(power)} />
        </Plot>
      </ScopeWindow>

      <ScopeWindow title="Scope1" active className="top-[481px] left-[37px] w-[827px]" plotHeight="h-[408px]" fitAll>
        <Plot
          box={[41, 10, 808, 378]}
          xTicks={x1}
          yTicks={[['60.15', 49], ['60.1', 117], ['60.05', 185], ['60', 252], ['59.95', 320]]}
          showX
        >
          <path d="M42 126.5 L53 125.5" />
          <path d={smooth(freq)} />
        </Plot>
      </ScopeWindow>

      <Notes />
    </main>
  )
}
